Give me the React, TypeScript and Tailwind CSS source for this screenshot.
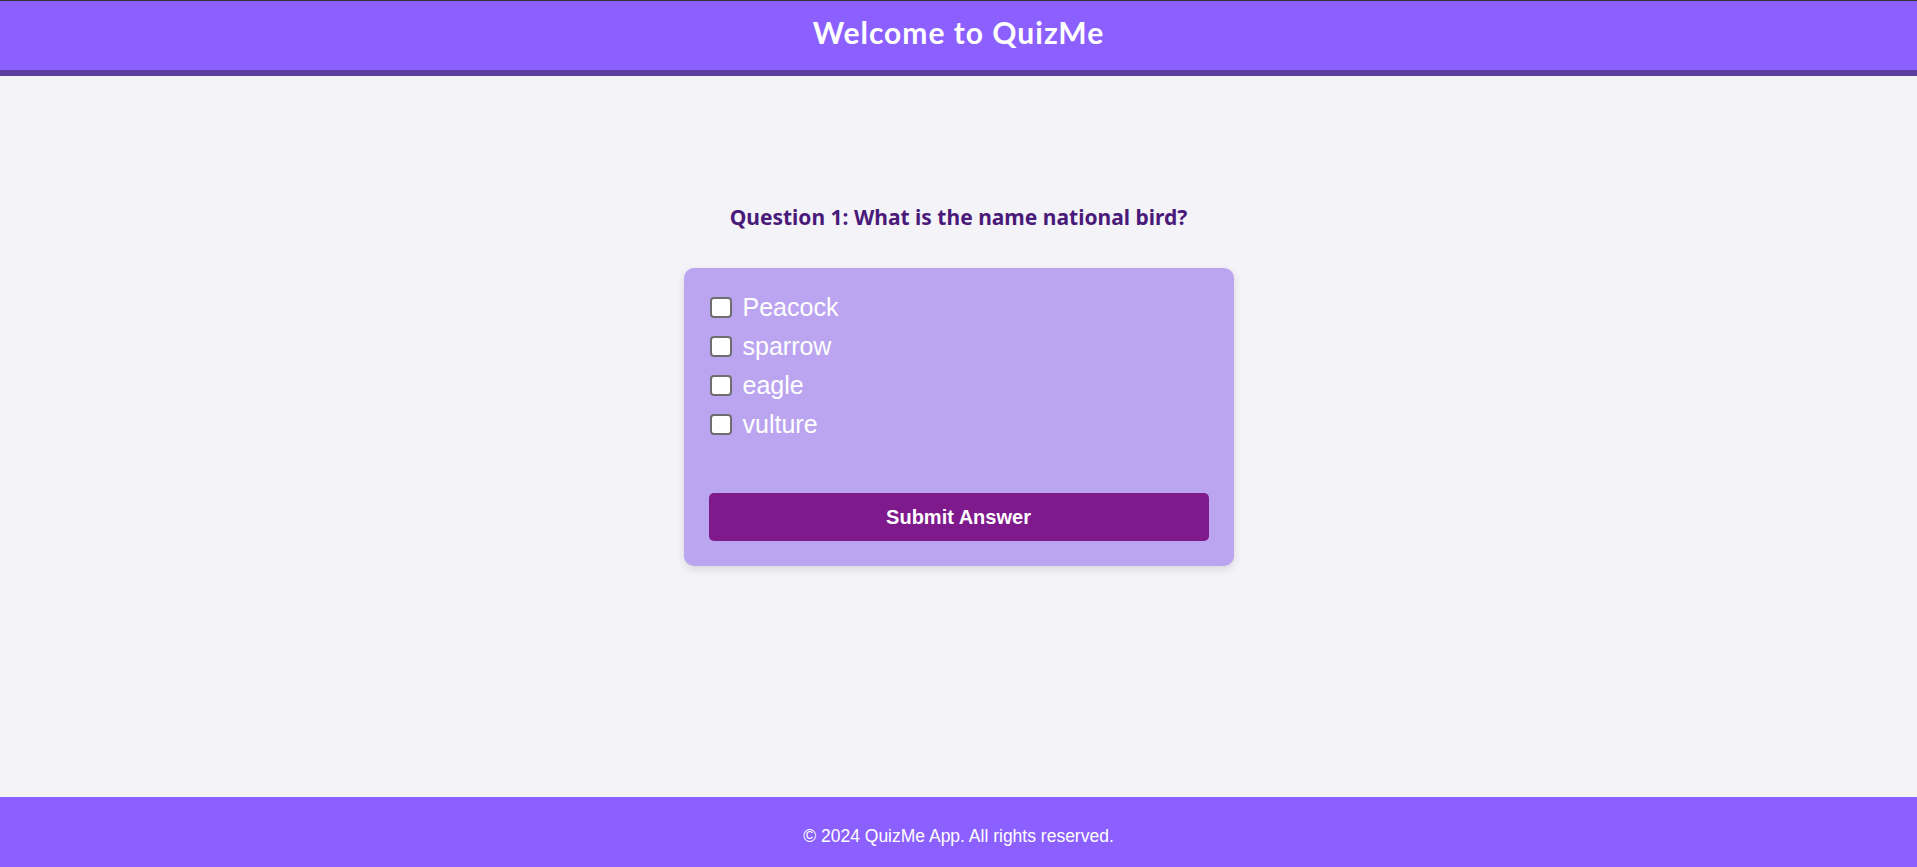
import React, { useState } from 'react';

const opciones = ['Peacock', 'sparrow', 'eagle', 'vulture'];

export default function App() {
  const [marcadas, setMarcadas] = useState<string[]>([]);

  const alternar = (op: string) => {
    setMarcadas((prev) => (prev.includes(op) ? prev.filter((o) => o !== op) : [...prev, op]));
  };

  return (
    <div className="min-h-screen flex flex-col bg-[#f4f3f8]">
      <header className="border-t border-[#333333] bg-[#8c5fff] border-b-[6px] border-b-[#5b3e9f]">
        <div className="h-[69px] flex items-center justify-center pb-[6px]">
          <h1 className="text-white font-bold text-[30px] tracking-[1px] font-['Lato','Open_Sans',sans-serif]">
            Welcome to QuizMe
          </h1>
        </div>
      </header>

      <main className="flex-1 flex flex-col items-center pt-[127px]">
        <h2 className="text-[21px] leading-[28px] font-bold text-[#4a1a7a] font-['Noto_Sans','Open_Sans',sans-serif]">
          Question 1: What is the name national bird?
        </h2>

        <div className="mt-[37px] w-[550px] bg-[#bba5f0] rounded-[10px] p-[25px] shadow-[0_3px_8px_rgba(0,0,0,0.12)]">
          <div className="flex flex-col gap-[11px]">
            {opciones.map((op) => (
              <label key={op} className="flex items-center gap-[11px] h-[28px] cursor-pointer">
                <input
                  type="checkbox"
                  checked={marcadas.includes(op)}
                  onChange={() => alternar(op)}
                  className="appearance-none w-[22px] h-[21px] m-0 ml-[1px] bg-white border-2 border-[#6e6e6e] rounded-[4px] checked:bg-[#0075ff] checked:border-[#0075ff]"
                />
                <span className="text-[25px] leading-[28px] text-white font-['Liberation_Sans',Arial,sans-serif]">
                  {op}
                </span>
              </label>
            ))}
          </div>

          <button className="mt-[55px] w-full h-[48px] rounded-[5px] bg-[#7e1a8c] text-white font-bold text-[20px] font-['Liberation_Sans',Arial,sans-serif]">
            Submit Answer
          </button>
        </div>
      </main>

      <footer className="h-[70px] bg-[#8c5fff] flex items-center justify-center pt-[8px]">
        <p className="text-white text-[17.5px] font-['Liberation_Sans',Arial,sans-serif]">
          © 2024 QuizMe App. All rights reserved.
        </p>
      </footer>
    </div>
  );
}
